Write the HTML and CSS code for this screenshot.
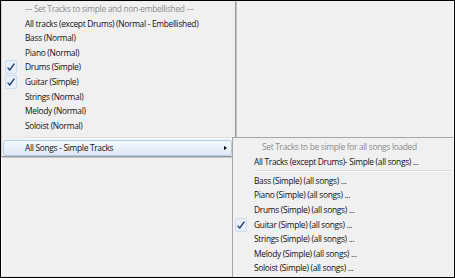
FILE: index.html
```html
<!DOCTYPE html>
<html>
<head>
<meta charset="utf-8">
<title>Simple Tracks menu</title>
<link rel="stylesheet" href="styles.css">
</head>
<body>
<div class="screen">
  <div class="pane pane-left-top"></div>
  <div class="pane pane-right-top"></div>
  <div class="pane pane-left-bottom"></div>
  <div class="pane pane-right-bottom"></div>

  <div class="menu menu-main">
    <div class="item item-head">--- Set Tracks to simple and non-embellished ---</div>
    <div class="item">All tracks (except Drums) (Normal - Embellished)</div>
    <div class="item">Bass (Normal)</div>
    <div class="item">Piano (Normal)</div>
    <div class="item"><span class="check"><svg width="10" height="12" viewBox="0 0 10 12"><path d="M1.6 6.6 L3.8 9 L8.4 2.6" fill="none" stroke="#16356f" stroke-width="1.3"/></svg></span>Drums (Simple)</div>
    <div class="item"><span class="check"><svg width="10" height="12" viewBox="0 0 10 12"><path d="M1.6 6.6 L3.8 9 L8.4 2.6" fill="none" stroke="#16356f" stroke-width="1.3"/></svg></span>Guitar (Simple)</div>
    <div class="item">Strings (Normal)</div>
    <div class="item">Melody (Normal)</div>
    <div class="item">Soloist (Normal)</div>
    <div class="sep"></div>
    <div class="item item-hot">All Songs - Simple Tracks<span class="arrow"></span></div>
  </div>

  <div class="menu menu-sub">
    <div class="item item-head">Set Tracks to be simple for all songs loaded</div>
    <div class="item">All Tracks (except Drums)- Simple (all songs) ...</div>
    <div class="sep"></div>
    <div class="item">Bass (Simple) (all songs) ...</div>
    <div class="item">Piano (Simple) (all songs) ...</div>
    <div class="item">Drums (Simple) (all songs) ...</div>
    <div class="item"><span class="check"><svg width="10" height="12" viewBox="0 0 10 12"><path d="M1.6 6.6 L3.8 9 L8.4 2.6" fill="none" stroke="#16356f" stroke-width="1.3"/></svg></span>Guitar (Simple) (all songs) ...</div>
    <div class="item">Strings (Simple) (all songs) ...</div>
    <div class="item">Melody (Simple) (all songs) ...</div>
    <div class="item">Soloist (Simple) (all songs) ...</div>
  </div>
</div>
</body>
</html>
```

FILE: styles.css
```css
/* Windows 7 style popup menus */

body
{ margin: 0;
}

.screen
{ position: relative;
width: 455px;
height: 278px;
box-sizing: border-box;
border: 1px solid #000;
background-color: #f1f1f1;
display: grid;
grid-template-columns: 231px 1fr;
grid-template-rows: 136px 1fr;
font-family: "Open Sans", sans-serif;
font-size: 8.4px;
letter-spacing: -0.3px;
color: #111;
overflow: hidden;
}

/* window panes behind the menus */

.pane
{ background-color: #f1f1f1;
}

.pane-right-top
{ border-right: 1px solid #fdfdfd;
}

.pane-left-bottom
{ border-left: 1px solid #fbfbfb;
border-bottom: 1px solid #e4e4e4;
}

/* Menus */

.menu
{ position: absolute;
box-sizing: border-box;
background-color: #f0f0f0;
}

.menu-main
{ left: 0;
top: 0;
width: 235px;
height: 156px;
padding: 1px;
border-left: 1px solid #d4d4d4;
border-right: 1px solid #9a9a9a;
border-bottom: 1px solid #9a9a9a;
box-shadow: 1px 1px 0 #c6c6c6;
}

.menu-sub
{ left: 231px;
top: 136px;
right: 0;
bottom: 0;
padding-top: 2px;
border-left: 1px solid #a6a6a6;
border-top: 1px solid #a6a6a6;
border-right: 1px solid #fbfbfb;
}

.item
{ position: relative;
height: 14.6px;
line-height: 14.6px;
padding-left: 22px;
white-space: nowrap;
}

.menu-sub .item
{ padding-left: 21px;
}

.item-head
{ color: #8c8c8c;
}

.menu-sub .item-head
{ padding-left: 29px;
}

.item-hot
{ box-sizing: border-box;
height: 16px;
line-height: 14px;
margin-right: 2px;
padding-left: 21px;
border: 1px solid #b3cde9;
border-radius: 3px;
background: linear-gradient(#f3f8fd, #dfe9f5);
}

.arrow
{ position: absolute;
right: 4px;
top: 5px;
width: 0;
height: 0;
border-top: 2.5px solid transparent;
border-bottom: 2.5px solid transparent;
border-left: 3px solid #000;
}

.check
{ position: absolute;
left: 2px;
top: 0;
width: 12px;
height: 14px;
box-sizing: border-box;
border: 1px solid #c9dcf1;
border-radius: 2px;
background-color: #e8eff8;
display: flex;
align-items: center;
justify-content: center;
}

.sep
{ height: 1px;
margin: 3.5px 0 1px 22px;
background-color: #dcdcdc;
border-bottom: 1px solid #fcfcfc;
}

.menu-sub .sep
{ margin: 1.3px 2px 1.3px 21px;
}
```
